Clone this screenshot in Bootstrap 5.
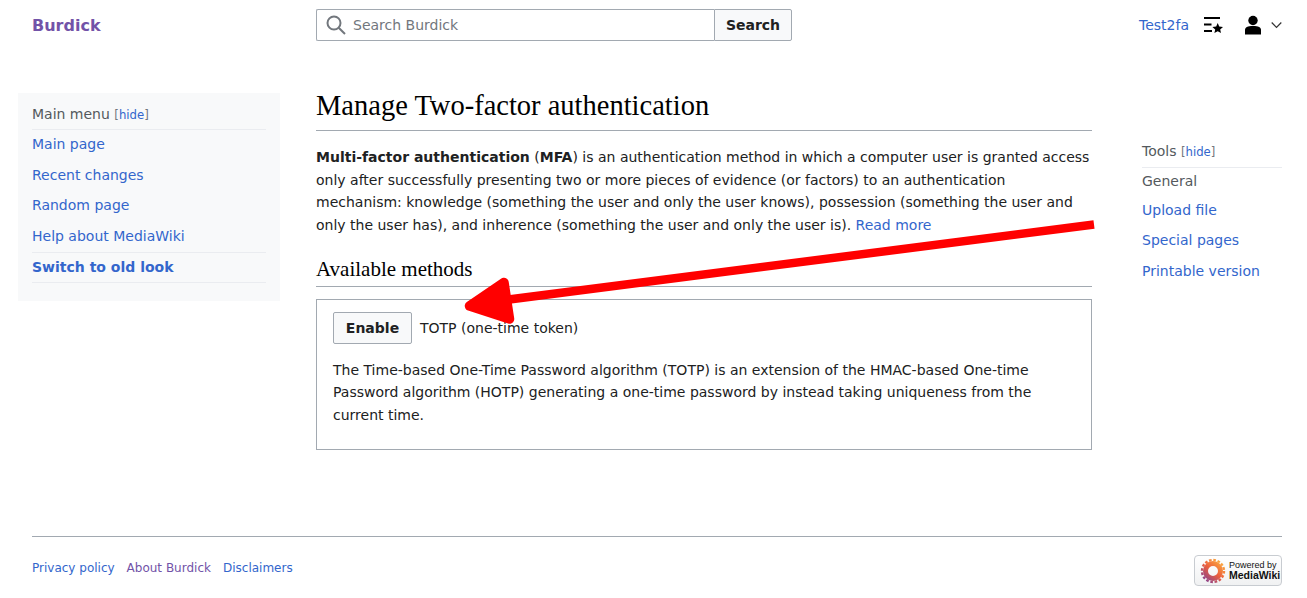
<!doctype html>
<html lang="en"><head><meta charset="utf-8"><title>Manage Two-factor authentication</title>
<link href="https://cdn.jsdelivr.net/npm/bootstrap@5.3.0/dist/css/bootstrap.min.css" rel="stylesheet">
<style>
html,body{height:598px;overflow:hidden}
body{font-family:"DejaVu Sans",sans-serif;font-size:14px;line-height:22.4px;color:#202122;background:#fff;position:relative}
a{color:#3366cc;text-decoration:none}
.topbar{height:50px;padding:9px 25px 0 32px}
.brand{width:284px;font-weight:700;font-size:16px;color:#7253a8;line-height:33px}
.searchbox{width:476px;height:32px}
.searchfield{flex:1;border:1px solid #a2a9b1;border-right:0;border-radius:2px 0 0 2px;color:#72777d;padding-left:9px;gap:7px;height:32px}
.searchbtn{width:78px;height:32px;border:1px solid #a2a9b1;background:#f8f9fa;border-radius:0 2px 2px 0;font-weight:700;font-size:14px;color:#202122;padding:0}
.usermenu{margin-left:auto;gap:14px;height:32px}
.usermenu a{font-size:14px}
.usergroup{gap:8px;margin-left:6px}
.mainrow{padding-top:43px}
.sidemenu{width:262px;margin-left:18px;height:208px;background:#f8f9fa;padding:9px 14px 0 14px;flex:none;color:#54595d}
.menuhead{height:28px;border-bottom:1px solid #eaecf0;line-height:24px}
.hidetag{font-size:11.7px;color:#72777d}
.menuitem{display:block;line-height:30.6px}
.firstitem{margin-top:-1px}
.oldlook{font-weight:700;border-top:1px solid #eaecf0;border-bottom:1px solid #eaecf0;line-height:29px;margin-top:1px}
.content{width:776px;margin-left:36px;flex:none}
.pagetitle{font-family:"Liberation Serif",serif;font-size:28.5px;line-height:36px;margin:-5px 0 0;padding:0;border-bottom:1px solid #a2a9b1;height:43px;color:#000;font-weight:400}
.intro{margin:15px 0 0;padding-top:.4px}
.subtitle{font-family:"Liberation Serif",serif;font-size:21px;line-height:27px;margin:19.600px 0 0;height:31px;border-bottom:1px solid #a2a9b1;color:#000;font-weight:400}
.method{border:1px solid #a2a9b1;margin-top:12px;height:151px;padding:12px 16px}
.enablebtn{width:79px;height:32px;border:1px solid #a2a9b1;background:#f8f9fa;border-radius:2px;font-weight:700;font-size:14px;color:#202122;padding:1px 0 0}
.methodname{padding-top:1px}
.methoddesc{margin:15.400px 0 0}
.toolside{width:140px;margin-left:50px;flex:none;padding-top:44px;color:#54595d}
.toolhead{height:31px;border-bottom:1px solid #eaecf0;line-height:28px}
.toolgen{line-height:26px}
.toolside a.menuitem{line-height:30.5px}
.toolside .firstlink{margin-top:.5px}
.pagefoot{position:absolute;left:32px;right:25px;top:536px;border-top:1px solid #a2a9b1;padding-top:21px;font-size:12px;line-height:20px;gap:12px}
.violet{color:#7253a8}
.poweredbadge{margin-left:auto;margin-top:-3px;width:88px;height:31px;border:1px solid #c8ccd1;background:linear-gradient(#fff,#f0f1f2);border-radius:4px;gap:3px;padding-left:5px;font-family:"Liberation Sans",sans-serif;font-size:9px;line-height:10px;color:#111}
.wikiword{font-size:10.500px;font-weight:700}
.arrowlayer{position:absolute;left:0;top:0;pointer-events:none}
</style></head><body>
<header class="topbar d-flex align-items-start">
<a class="brand" href="#">Burdick</a>
<form class="searchbox d-flex">
<div class="searchfield d-flex align-items-center"><svg width="20" height="20" viewBox="0 0 20 20" aria-hidden="true"><circle cx="8" cy="8" r="6.500" fill="none" stroke="#72777d" stroke-width="2"/><path d="M12.700 12.700 19 19" stroke="#72777d" stroke-width="2"/></svg><span>Search Burdick</span></div>
<button class="searchbtn" type="button">Search</button>
</form>
<nav class="usermenu d-flex align-items-center">
<a href="#">Test2fa</a>
<svg width="20" height="20" viewBox="0 0 20 20" aria-hidden="true"><path d="M1 2h16v2H1zM1 8.500h7.500v2H1zM1 15h8v2H1z" fill="#000"/><path d="M14.700 8l1.500 3.500 3.800.4-2.800 2.500.8 3.700-3.300-1.900-3.300 1.900.8-3.700-2.800-2.500 3.800-.4z" fill="#000"/></svg>
<span class="usergroup d-flex align-items-center"><svg width="20" height="20" viewBox="0 0 20 20" aria-hidden="true"><circle cx="10" cy="5.500" r="4.700" fill="#000"/><path d="M2 19.500v-4.500c0-2.600 2.500-4 8-4s8 1.400 8 4v4.500z" fill="#000"/></svg><svg width="11" height="12" viewBox="0 0 11 12" aria-hidden="true"><path d="M.7 3.500l4.800 4.800 4.800-4.800" fill="none" stroke="#333" stroke-width="1.200"/></svg></span>
</nav>
</header>
<div class="mainrow d-flex align-items-start">
<aside class="sidemenu">
<div class="menuhead">Main menu <span class="hidetag">[<a href="#">hide</a>]</span></div>
<a class="menuitem firstitem" href="#">Main page</a>
<a class="menuitem" href="#">Recent changes</a>
<a class="menuitem" href="#">Random page</a>
<a class="menuitem" href="#">Help about MediaWiki</a>
<a class="menuitem oldlook" href="#">Switch to old look</a>
</aside>
<main class="content">
<h1 class="pagetitle">Manage Two-factor authentication</h1>
<p class="intro"><b>Multi-factor authentication</b> (<b>MFA</b>) is an authentication method in which a computer user is granted access only after successfully presenting two or more pieces of evidence (or factors) to an authentication mechanism: knowledge (something the user and only the user knows), possession (something the user and only the user has), and inherence (something the user and only the user is). <a href="#">Read more</a></p>
<h2 class="subtitle">Available methods</h2>
<section class="method">
<div class="d-flex align-items-center gap-2"><button class="enablebtn" type="button">Enable</button><span class="methodname">TOTP (one-time token)</span></div>
<p class="methoddesc">The Time-based One-Time Password algorithm (TOTP) is an extension of the HMAC-based One-time Password algorithm (HOTP) generating a one-time password by instead taking uniqueness from the current time.</p>
</section>
</main>
<aside class="toolside">
<div class="toolhead">Tools <span class="hidetag">[<a href="#">hide</a>]</span></div>
<div class="toolgen">General</div>
<a class="menuitem firstlink" href="#">Upload file</a>
<a class="menuitem" href="#">Special pages</a>
<a class="menuitem" href="#">Printable version</a>
</aside>
</div>
<footer class="pagefoot d-flex align-items-start">
<a href="#">Privacy policy</a><a class="violet" href="#">About Burdick</a><a href="#">Disclaimers</a>
<div class="poweredbadge d-flex align-items-center">
<svg width="26" height="26" viewBox="-13 -13 26 26" aria-hidden="true">
<defs><linearGradient id="flower" gradientUnits="userSpaceOnUse" x1="9" y1="-11" x2="-9" y2="11"><stop offset="0" stop-color="#fdb53f"/><stop offset=".5" stop-color="#ec5f3d"/><stop offset="1" stop-color="#7f3f98"/></linearGradient></defs>
<circle r="7.500" fill="none" stroke="url(#flower)" stroke-width="5"/>
<circle r="11" fill="none" stroke="url(#flower)" stroke-width="2.400" stroke-dasharray="2.600 1.720"/>
</svg>
<div>Powered by<br><span class="wikiword">MediaWiki</span></div>
</div>
</footer>
<svg class="arrowlayer" width="1307" height="598" aria-hidden="true"><path d="M1094 224.500 505 300" stroke="#f00" stroke-width="8.500" fill="none"/><path d="M504 282.500 469.500 306 509.500 319z" fill="#f00" stroke="#f00" stroke-width="9.500" stroke-linejoin="round"/></svg>
<script src="https://cdn.jsdelivr.net/npm/bootstrap@5.3.0/dist/js/bootstrap.bundle.min.js"></script>
</body></html>
